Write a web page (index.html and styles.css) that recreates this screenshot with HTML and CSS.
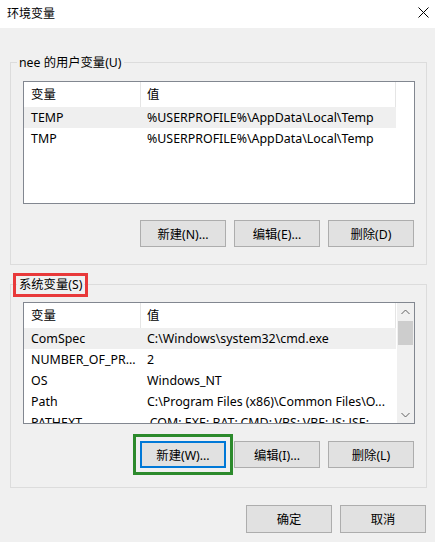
FILE: index.html
```html
<!DOCTYPE html>
<html>
<head>
  <meta charset="utf-8">
  <title>环境变量</title>
  <link rel="stylesheet" href="styles.css">
</head>
<body>
  <div class="titlebar">
    <span class="title">环境变量</span>
    <svg class="close" width="11" height="11" viewBox="0 0 11 11">
      <path d="M0.5 0.5 L10.5 10.5 M10.5 0.5 L0.5 10.5" stroke="#000" stroke-width="1" fill="none"/>
    </svg>
  </div>

  <!-- user variables -->
  <div class="group group-user">
    <div class="group-title">nee 的用户变量(U)</div>
    <div class="list list-user">
      <div class="list-body">
        <div class="row head">
          <div class="cell">变量</div>
          <div class="cell value">值</div>
        </div>
        <div class="row selected">
          <div class="cell">TEMP</div>
          <div class="cell value">%USERPROFILE%\AppData\Local\Temp</div>
        </div>
        <div class="row">
          <div class="cell">TMP</div>
          <div class="cell value">%USERPROFILE%\AppData\Local\Temp</div>
        </div>
      </div>
    </div>
    <div class="buttons">
      <button class="btn">新建(N)...</button>
      <button class="btn">编辑(E)...</button>
      <button class="btn">删除(D)</button>
    </div>
  </div>

  <!-- system variables -->
  <div class="group group-system">
    <div class="group-title marked">系统变量(S)</div>
    <div class="list list-system">
      <div class="list-body">
        <div class="row head">
          <div class="cell">变量</div>
          <div class="cell value">值</div>
        </div>
        <div class="row selected">
          <div class="cell">ComSpec</div>
          <div class="cell value">C:\Windows\system32\cmd.exe</div>
        </div>
        <div class="row">
          <div class="cell">NUMBER_OF_PR...</div>
          <div class="cell value">2</div>
        </div>
        <div class="row">
          <div class="cell">OS</div>
          <div class="cell value">Windows_NT</div>
        </div>
        <div class="row">
          <div class="cell">Path</div>
          <div class="cell value">C:\Program Files (x86)\Common Files\O...</div>
        </div>
        <div class="row">
          <div class="cell">PATHEXT</div>
          <div class="cell value">.COM;.EXE;.BAT;.CMD;.VBS;.VBE;.JS;.JSE;...</div>
        </div>
      </div>
      <div class="scrollbar">
        <div class="arrow">
          <svg width="9" height="6" viewBox="0 0 9 6"><path d="M0.5 5 L4.5 1 L8.5 5" stroke="#606060" fill="none"/></svg>
        </div>
        <div class="thumb"></div>
        <div class="track"></div>
        <div class="arrow">
          <svg width="9" height="6" viewBox="0 0 9 6"><path d="M0.5 1 L4.5 5 L8.5 1" stroke="#606060" fill="none"/></svg>
        </div>
      </div>
    </div>
    <div class="buttons">
      <button class="btn focused">新建(W)...</button>
      <button class="btn">编辑(I)...</button>
      <button class="btn">删除(L)</button>
    </div>
  </div>

  <div class="footer">
    <button class="btn">确定</button>
    <button class="btn">取消</button>
  </div>
</body>
</html>
```

FILE: styles.css
```css
* {
  box-sizing: border-box;
}

body {
  margin: 0;
  width: 435px;
  height: 542px;
  overflow: hidden;
  background-color: #f0f0f0;
  font-family: "Noto Sans", "Noto Sans CJK SC", sans-serif;
  font-size: 12px;
  color: #000;
}

.titlebar {
  height: 28px;
  background-color: #fff;
  display: flex;
  align-items: center;
  justify-content: space-between;
  padding: 0 6px 2px 7px;
}

.close {
  display: block;
  margin-top: -1px;
}

.group {
  margin: 0 8px 0 10px;
  border: 1px solid #dcdcdc;
  padding: 0 11px 17px 12px;
}

.group-user {
  margin-top: 34px;
}

.group-system {
  margin-top: 19px;
  padding-bottom: 19px;
}

.group-title {
  display: table;
  margin: -8px 0 0 -6px;
  padding: 0 2px;
  line-height: 16px;
  background-color: #f0f0f0;
  font-size: 12.3px;
}

.group-title.marked {
  outline: 3px solid #e8393a;
  outline-offset: 1px;
}

.list {
  display: flex;
  margin-top: 10px;
  height: 123px;
  border: 1px solid #828790;
  background-color: #fff;
  overflow: hidden;
}

.list-system {
  margin-top: 9px;
  height: 122px;
}

.list-body {
  flex: 1;
}

.row {
  display: grid;
  grid-template-columns: 117px 255px;
  width: 372px;
  height: 21px;
  align-items: center;
}

.row.head {
  height: 25px;
  align-items: stretch;
}

.row.head .cell {
  display: flex;
  align-items: center;
  border-right: 1px solid #e5e5e5;
  padding-bottom: 1px;
}

.row.selected {
  background-color: #efefef;
}

.cell {
  padding-left: 7px;
  white-space: nowrap;
  overflow: hidden;
  font-size: 12.4px;
}

.cell.value {
  padding-left: 6px;
}

.scrollbar {
  width: 17px;
  display: flex;
  flex-direction: column;
  background-color: #f0f0f0;
}

.arrow {
  height: 17px;
  display: flex;
  align-items: center;
  justify-content: center;
}

.thumb {
  height: 24px;
  margin: 1px 1px 0 1px;
  background-color: #cdcdcd;
}

.track {
  flex: 1;
}

.buttons {
  display: flex;
  justify-content: flex-end;
  gap: 8px;
  margin-top: 16px;
  padding-right: 1px;
}

.group-system .buttons {
  margin-top: 17px;
}

.btn {
  width: 86px;
  height: 27px;
  padding: 0;
  border: 1px solid #adadad;
  background-color: #e1e1e1;
  font-family: inherit;
  font-size: 12.3px;
  color: #000;
}

.btn.focused {
  border: 2px solid #0078d7;
  outline: 3px solid #2c8a2c;
  outline-offset: 4px;
}

.footer {
  display: flex;
  justify-content: flex-end;
  gap: 8px;
  margin-top: 17px;
  padding-right: 9px;
}

.footer .btn {
  height: 28px;
}
```
